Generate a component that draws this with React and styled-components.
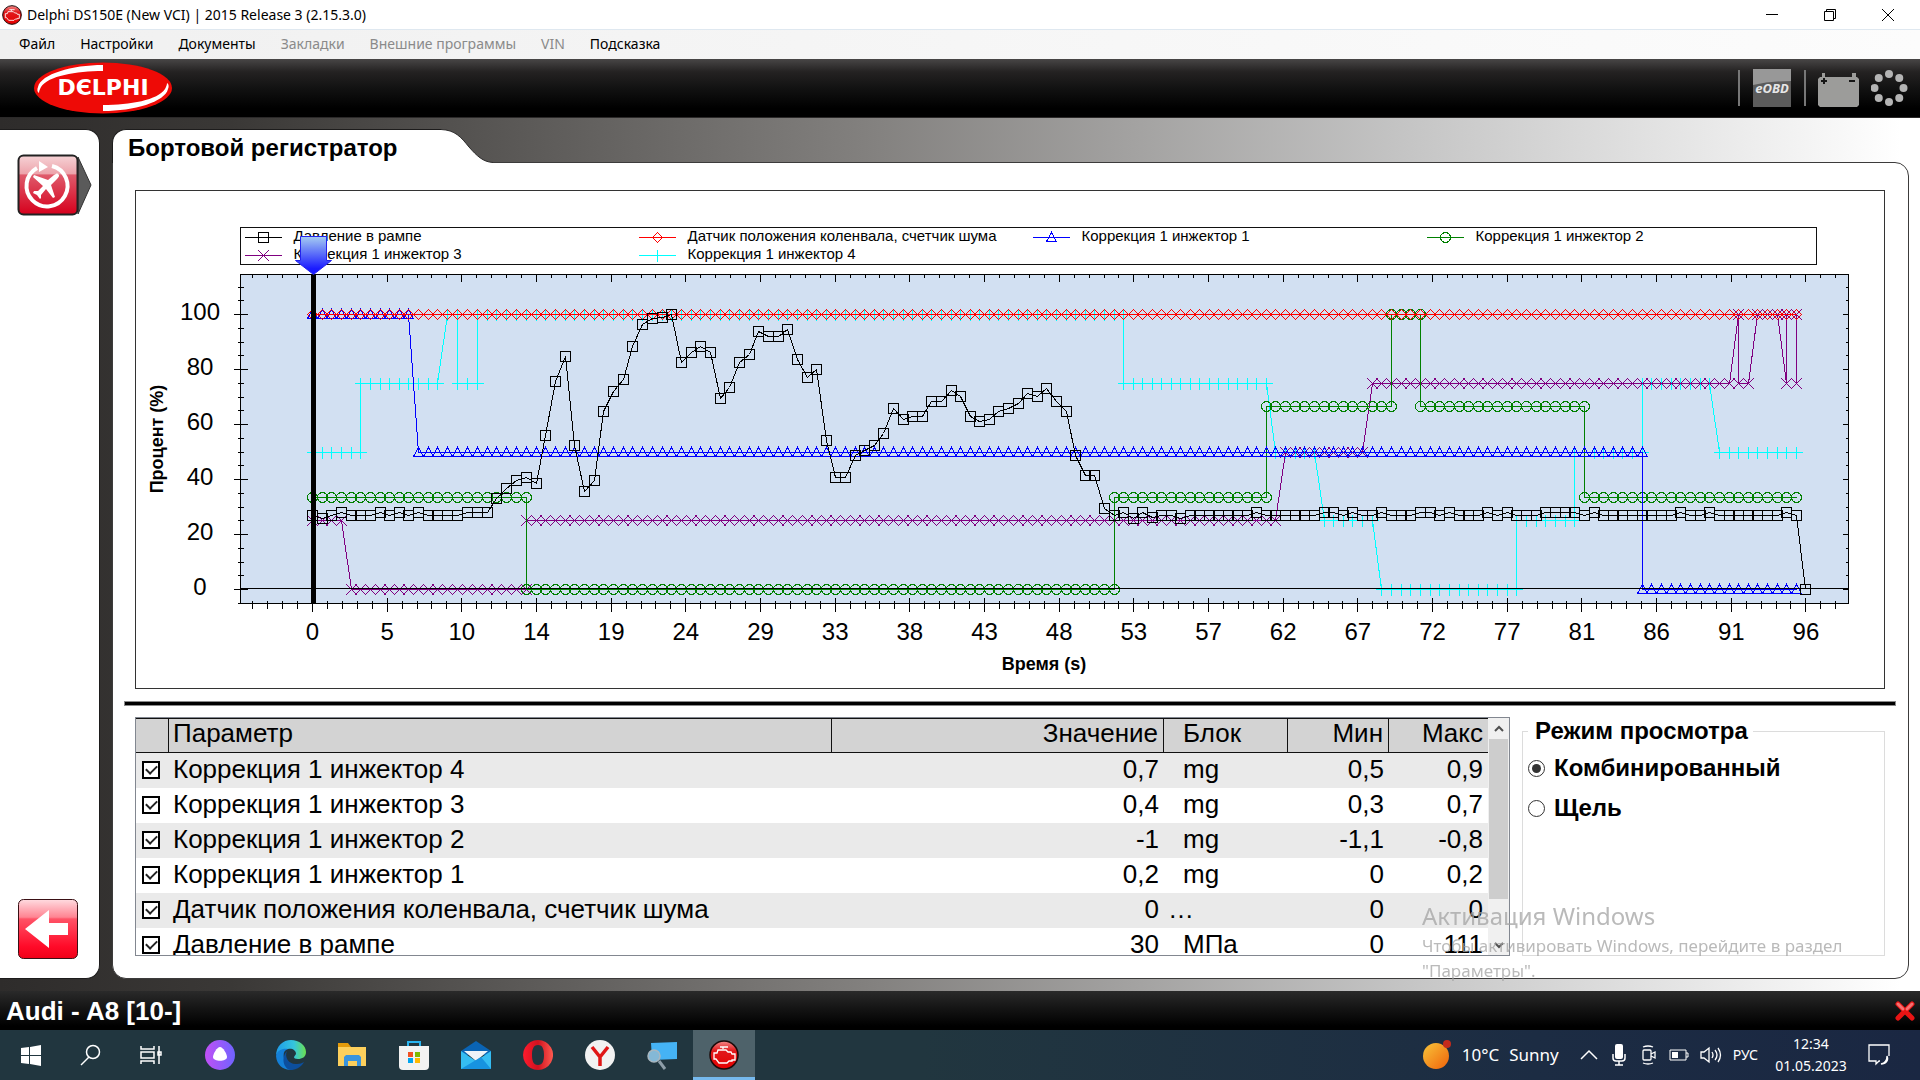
import React from 'react';
import styled, { createGlobalStyle } from 'styled-components';

const SANS = '"Liberation Sans", Arial, sans-serif';
const UI = '"Noto Sans", "Open Sans", sans-serif';

const GlobalStyle = createGlobalStyle`
  * { box-sizing: border-box; }
  body {
    margin: 0;
    background: #ffffff;
    color: #000000;
    font-family: ${SANS};
  }
  button, input { font: inherit; margin: 0; }
`;

const S = {
    Page: styled.div`
    min-height: 100vh;
    display: flex;
    flex-direction: column;
  `,
    TitleBar: styled.header`
    height: 29px;
    padding: 0 26px 0 2px;
    display: flex;
    align-items: center;
    gap: 5px;
    font-family: ${UI};
  `,
    WindowTitle: styled.h1`
    flex: 1;
    margin: 0;
    font-size: 14px;
    line-height: 20px;
    font-weight: normal;
  `,
    WindowButtons: styled.div`
    display: flex;
    gap: 46px;
  `,
    PlainButton: styled.button`
    display: flex;
    align-items: center;
    justify-content: center;
    padding: 0;
    border: 0;
    background: transparent;
    color: inherit;
  `,
    MenuBar: styled.nav`
    height: 30px;
    padding: 0 19px 2px;
    display: flex;
    align-items: center;
    gap: 25px;
    border-top: 1px solid #dfe8f0;
    background: linear-gradient(90deg, #f0f0f0, #fcfcfc);
    font-family: ${UI};
    font-size: 14px;
    line-height: 20px;
  `,
    MenuItem: styled.button`
    padding: 0;
    border: 0;
    background: transparent;
    color: #000000;
    white-space: nowrap;
    &:disabled { color: #8a8a8a; }
  `,
    Brand: styled.div`
    height: 59px;
    padding: 0 11px 0 34px;
    display: flex;
    align-items: center;
    background: linear-gradient(180deg, #484646 0%, #242222 22%, #121212 50%, #000000 85%);
    border-bottom: 1px solid #2b2929;
  `,
    BrandTools: styled.div`
    margin-left: auto;
    display: flex;
    align-items: center;
    gap: 12px;
  `,
    Separator: styled.span`
    width: 2px;
    height: 36px;
    background: #777777;
  `,
    Workspace: styled.div`
    flex: 1;
    padding: 11px 11px 12px 0;
    display: flex;
    gap: 12px;
    background: linear-gradient(90deg, #2e2c2b 0%, #3a3836 12%, #82807e 45%, #c4c4c4 73%, #ffffff 99%);
  `,
    Sidebar: styled.aside`
    width: 100px;
    padding: 24px 7px 18px 17px;
    display: flex;
    flex-direction: column;
    justify-content: space-between;
    align-items: flex-start;
    background: #ffffff;
    border: 1px solid #1d1c1c;
    border-left: 0;
    border-radius: 0 14px 14px 0;
  `,
    Main: styled.main`
    flex: 1;
    min-width: 0;
    display: flex;
    flex-direction: column;
  `,
    TabRow: styled.div`
    display: flex;
    margin-bottom: -1px;
    z-index: 1;
  `,
    Tab: styled.h2`
    width: 329px;
    height: 34px;
    margin: 0;
    padding: 4px 0 0 15px;
    background: #ffffff;
    border: 1px solid #1d1c1c;
    border-width: 1px 0 0 1px;
    border-radius: 14px 0 0 0;
    font-size: 24px;
    line-height: 28px;
    white-space: nowrap;
  `,
    Panel: styled.section`
    flex: 1;
    padding: 27px 12px 22px 11px;
    background: #ffffff;
    border: 1px solid #3c3b3b;
    border-radius: 0 14px 14px 14px;
    display: flex;
    flex-direction: column;
  `,
    ChartBox: styled.div`
    margin: 0 11px 12px;
    border: 1px solid #333333;
    svg { display: block; width: 100%; height: auto; }
  `,
    Divider: styled.div`
    height: 5px;
    background: #000000;
    border: 1px solid #8a8a8a;
  `,
    Lower: styled.div`
    flex: 1;
    margin: 11px 11px 0;
    display: flex;
    gap: 12px;
  `,
    TableFrame: styled.div`
    flex: 1;
    height: 239px;
    overflow: hidden;
    display: flex;
    border: 1px solid #828790;
  `,
    Table: styled.table`
    flex: 1;
    align-self: flex-start;
    table-layout: fixed;
    border-collapse: separate;
    border-spacing: 0;
    font-size: 26px;
    line-height: 28px;
    white-space: nowrap;
  `,
    Head: styled.th`
    width: ${props => props.$width || 'auto'};
    height: 35px;
    padding: 0 5px 5px ${props => (props.$unit ? 19 : 4)}px;
    background: #d3d3d3;
    border: 1px solid #111111;
    border-width: 1px ${props => (props.$last ? 0 : 1)}px 1px 0;
    font-weight: normal;
    text-align: ${props => props.$align || 'left'};
  `,
    Row: styled.tr`
    background: #ffffff;
    &:nth-child(odd) { background: #eaeaea; }
  `,
    Cell: styled.td`
    height: 35px;
    padding: 0 5px 3px ${props => (props.$indent || 4)}px;
    text-align: ${props => props.$align || 'left'};
  `,
    CheckCell: styled.td`
    height: 35px;
    padding: 0 0 1px 6px;
    vertical-align: middle;
  `,
    CheckBox: styled.input`
    appearance: none;
    display: grid;
    place-items: center;
    width: 18px;
    height: 18px;
    background: #ffffff;
    border: 2px solid #000000;
    &:checked::after {
      content: '';
      width: 5px;
      height: 9px;
      margin-bottom: 3px;
      border: solid #222222;
      border-width: 0 2px 2px 0;
      transform: rotate(45deg);
    }
  `,
    ScrollBar: styled.div`
    width: 21px;
    padding: 0 1px;
    display: flex;
    flex-direction: column;
    background: #f0f0f0;
  `,
    ScrollButton: styled.button`
    height: 21px;
    padding: 0;
    border: 0;
    background: transparent;
    display: flex;
    align-items: center;
    justify-content: center;
  `,
    ScrollTrack: styled.div`
    flex: 1;
    display: flex;
    flex-direction: column;
  `,
    ScrollThumb: styled.div`
    height: 82%;
    background: #cdcdcd;
  `,
    ViewMode: styled.fieldset`
    width: 363px;
    margin: 0;
    padding: 9px 5px 0;
    border: 1px solid #dcdcdc;
    font-size: 24px;
    line-height: 28px;
    font-weight: bold;
  `,
    ViewLegend: styled.legend`
    padding: 0 5px 0 7px;
  `,
    RadioLabel: styled.label`
    display: flex;
    align-items: center;
    gap: 9px;
    margin-bottom: 12px;
  `,
    Radio: styled.input`
    appearance: none;
    width: 17px;
    height: 17px;
    border: 1px solid #333333;
    border-radius: 50%;
    background: #ffffff;
    display: grid;
    place-items: center;
    &:checked::after {
      content: '';
      width: 9px;
      height: 9px;
      border-radius: 50%;
      background: #333333;
    }
  `,
    StatusBar: styled.footer`
    height: 39px;
    padding: 0 5px 0 6px;
    display: flex;
    align-items: center;
    justify-content: space-between;
    background: linear-gradient(180deg, #2a2a2a, #141414 45%, #000000 90%);
    color: #ffffff;
    font-size: 26px;
    line-height: 32px;
    font-weight: bold;
  `,
    TaskBar: styled.div`
    height: 50px;
    display: flex;
    background: linear-gradient(90deg, #21363f 0%, #21363f 48%, #1c2c43 80%, #1a2742 100%);
    color: #ffffff;
    font-family: ${UI};
  `,
    TaskButton: styled.button`
    width: ${props => props.$width || 62}px;
    padding: 3px 0 0;
    border: 0;
    border-bottom: 3px solid ${props => (props.$active ? '#76b9ed' : 'transparent')};
    background: ${props => (props.$active ? '#4e626a' : 'transparent')};
    display: flex;
    align-items: center;
    justify-content: center;
  `,
    Tray: styled.div`
    margin-left: auto;
    padding-right: 30px;
    display: flex;
    align-items: center;
    gap: 11px;
  `,
    Weather: styled.button`
    display: flex;
    align-items: center;
    gap: 10px;
    padding: 0;
    border: 0;
    background: transparent;
    color: inherit;
    font-size: 17px;
    line-height: 24px;
    margin-right: 10px;
  `,
    Lang: styled.span`
    font-size: 14px;
    line-height: 22px;
  `,
    Clock: styled.time`
    width: 84px;
    margin: 0 4px 0 0;
    font-size: 14px;
    line-height: 22px;
    text-align: center;
  `,
    // system notice floating over every window
    Watermark: styled.div`
    position: fixed;
    right: 60px;
    bottom: 97px;
    width: 438px;
    color: #a3a3a3;
    opacity: 0.75;
    font-family: ${UI};
    font-size: 17px;
    line-height: 25px;
    pointer-events: none;
  `,
    WatermarkTitle: styled.div`
    font-size: 24px;
    line-height: 34px;
  `,
};

/* ---------- chart ---------- */

const PLOT = { left: 104.5, right: 1712.5, top: 83.5, bottom: 412.5 };
const AXIS_X = 176.5;
const AXIS_STEP = 74.67;
const ZERO_Y = 398;
const PX_PER_PERCENT = 2.75;

const TIME_LABELS = [0, 5, 10, 14, 19, 24, 29, 33, 38, 43, 48, 53, 57, 62, 67, 72, 77, 81, 86, 91, 96];

// sample number -> offset from the start, the polling rate is not quite even
const CLOCK = [[0, 0], [14, 135], [22, 214], [50, 485], [82, 792], [101, 973], [154, 1484], [155, 1493]];

const sampleX = i => {
    const k = Math.max(1, CLOCK.findIndex(c => c[0] >= i));
    const [i0, x0] = CLOCK[k - 1];
    const [i1, x1] = CLOCK[k];
    return AXIS_X + Math.round(x0 + ((i - i0) / (i1 - i0)) * (x1 - x0));
};
const valueY = v => Math.round(ZERO_Y - v * PX_PER_PERCENT) + 0.5;

// [from, to, value] runs to a flat list of samples
const runs = list => list.flatMap(([from, to, v]) =>
    Array.from({ length: to - from + 1 }, (_, n) => [from + n, v]));

const PRESSURE = [
    27, 26, 27, 28, 27, 27, 27, 28, 27, 28, 27, 28, 27, 27, 27, 27, 28, 28, 28, 33,
    36.8, 39.6, 40.6, 38.5, 56, 75.5, 84.6, 52.3, 35.8, 39.5, 64.8, 72, 76.4, 88.3, 96.5, 98.4, 99, 100, 82.7, 86.3,
    88.4, 86.3, 69.3, 73.6, 82.7, 85.6, 93.7, 92, 92, 94.6, 83.8, 77.2, 80.1, 54.3, 40.6, 40.6, 48.6, 50.5, 52.3, 56.8,
    65.8, 62, 63, 63, 68.5, 68.5, 72.3, 70.2, 63, 61.1, 62, 64.8, 65.7, 67.6, 71.3, 70.3, 73.1, 68.5, 64.8, 48.6,
    41.4, 41.4, 29.6, 26.8, 28, 26, 28, 26.2, 27, 27, 26, 27, 27, 27, 27, 27, 27, 27, 28, 27,
    27, 27, 27, 27, 27, 28, 28, 27, 28, 27, 27, 28, 27, 27, 27, 28, 28, 27, 28, 27,
    27, 27, 28, 27, 28, 27, 27, 27, 28, 28, 28, 28, 27, 28, 27, 27, 27, 27, 27, 27,
    27, 27, 28, 27, 27, 28, 27, 27, 27, 27, 27, 27, 27, 28, 27, 0,
];

const MARKS = {
    square: 'm-5,-5h10v10h-10z',
    diamond: 'm0,-5l5,5l-5,5l-5,-5z',
    triangle: 'm0,-5l5,9h-10z',
    circle: 'm-5,0a5,5 0 1,0 10,0a5,5 0 1,0 -10,0',
    cross: 'm-5.5,-5.5l11,11m0,-11l-11,11',
    plus: 'm-6,0h12m-6,-6v12',
};

const SERIES = [
    {
        name: 'Давление в рампе', color: '#000000', mark: 'square',
        data: PRESSURE.map((v, i) => [i, v]),
    },
    {
        name: 'Датчик положения коленвала, счетчик шума', color: '#ff0000', mark: 'diamond',
        data: runs([[0, 154, 100]]),
    },
    {
        name: 'Коррекция 1 инжектор 1', color: '#0000ff', mark: 'triangle',
        data: runs([[0, 10, 100], [11, 138, 50], [138, 154, 0]]),
    },
    {
        name: 'Коррекция 1 инжектор 2', color: '#008000', mark: 'circle',
        data: runs([[0, 22, 33.3], [22, 83, 0], [83, 99, 33.3], [99, 112, 66.7], [112, 115, 100], [115, 132, 66.7], [132, 154, 33.3]]),
    },
    {
        name: 'Коррекция 1 инжектор 3', color: '#800080', mark: 'cross',
        data: runs([[0, 3, 25], [4, 22, 0], [22, 100, 25], [101, 109, 50], [110, 147, 75], [148, 148, 100], [148, 149, 75],
            [150, 152, 100], [153, 153, 75], [153, 154, 100], [154, 154, 75]]),
    },
    {
        name: 'Коррекция 1 инжектор 4', color: '#00ffff', mark: 'plus',
        data: runs([[0, 5, 50], [5, 13, 75], [14, 15, 100], [15, 17, 75], [17, 84, 100], [84, 99, 75], [100, 104, 50],
            [105, 110, 25], [111, 125, 0], [125, 131, 25], [131, 138, 50], [138, 145, 75], [146, 154, 50]]),
    },
];

const range = (from, to) => Array.from({ length: to - from + 1 }, (_, n) => from + n);

const ticks = () => {
    let d = '';
    range(-4, 102).forEach(n => {
        const x = Math.round(AXIS_X + (n * AXIS_STEP) / 5 - 0.5) + 0.5;
        const major = n % 5 === 0;
        const len = major ? 7 : 4;
        d += `M${x},${PLOT.top}v${major ? 7 : 3}M${x},${PLOT.bottom - len + 1}v${len * 2}`;
    });
    range(-1, 22).forEach(n => {
        const y = valueY(n * 5);
        const major = n % 4 === 0;
        const len = major ? 7 : 3;
        d += `M${PLOT.left - len},${y}h${len * 2}M${PLOT.right},${y}h${major ? -6 : -3}`;
    });
    return d;
};

const Curve = ({ series }) => (
    <g stroke={series.color} fill="none">
        <path d={'M' + series.data.map(([i, v]) => `${sampleX(i)},${valueY(v)}`).join('L')}/>
        <path d={series.data.map(([i, v]) => `M${sampleX(i)},${valueY(v)}${MARKS[series.mark]}`).join('')}/>
    </g>
);

const LegendEntry = ({ series, index }) => {
    const x = 108.5 + (index % 4) * 394;
    const y = index < 4 ? 46.5 : 64.5;
    return (
        <g>
            <path d={`M${x},${y}h37M${x + 19},${y}${MARKS[series.mark]}`} stroke={series.color} fill="none"
                  shapeRendering="crispEdges"/>
            <text x={x + 49} y={y + 3} fontSize="15">{series.name}</text>
        </g>
    );
};

const Chart = () => (
    <svg viewBox="0 0 1748 497" fontFamily={SANS} role="img" aria-label="Бортовой регистратор">
        <defs>
            <linearGradient id="cursor" x1="0" y1="0" x2="0" y2="1">
                <stop offset="0" stopColor="#a6cdf2"/>
                <stop offset="0.85" stopColor="#1a1aff"/>
            </linearGradient>
        </defs>
        <rect x={PLOT.left} y={PLOT.top} width={PLOT.right - PLOT.left} height={PLOT.bottom - PLOT.top}
              fill="#d2e0f2" stroke="#000000" shapeRendering="crispEdges"/>
        <g shapeRendering="crispEdges">
            <path d={ticks()} stroke="#000000"/>
            {[...SERIES].reverse().map(s => <Curve key={s.name} series={s}/>)}
            <path d={`M${PLOT.left},${ZERO_Y - 0.5}H${PLOT.right}`} stroke="#000000"/>
        </g>
        <rect x="104.5" y="36.5" width="1576" height="37" fill="#ffffff" stroke="#111111" shapeRendering="crispEdges"/>
        {SERIES.map((s, n) => <LegendEntry key={s.name} series={s} index={n}/>)}
        <rect x="175" y="83" width="5" height="330" fill="#000000"/>
        <path d="M164.500,45.500h26v24h5l-18,14l-18,-14h5z" fill="url(#cursor)" stroke="#2222ee"/>
        {[0, 20, 40, 60, 80, 100].map(v => (
            <text key={v} x="64" y={valueY(v) + 5} fontSize="24" textAnchor="middle">{v}</text>
        ))}
        {TIME_LABELS.map((t, n) => (
            <text key={t} x={AXIS_X + n * AXIS_STEP} y="449" fontSize="24" textAnchor="middle">{t}</text>
        ))}
        <text x="908" y="479" fontSize="18" fontWeight="bold" textAnchor="middle">Время (s)</text>
        <text transform="translate(27 248) rotate(-90)" fontSize="18" fontWeight="bold" textAnchor="middle">
            Процент (%)
        </text>
    </svg>
);

/* ---------- icons ---------- */

const EngineBadge = ({ size }) => (
    <svg width={size} height={size} viewBox="0 0 30 30">
        <defs>
            <linearGradient id="badge" x1="0" y1="0" x2="0" y2="1">
                <stop offset="0" stopColor="#f58a8a"/>
                <stop offset="0.35" stopColor="#e0191c"/>
                <stop offset="1" stopColor="#e60000"/>
            </linearGradient>
        </defs>
        <circle cx="15" cy="15" r="14" fill="url(#badge)" stroke="#1b0a0a" strokeWidth="1.500"/>
        <path d="M11 7h8M14 7v2M9 10h8l2 2h3l1 2h3v6h-3v1h-3l-2 2h-8l-3-4H5v-6h3z" fill="none"
              stroke="#ffffff" strokeWidth="1.300"/>
    </svg>
);

const DelphiLogo = () => (
    <svg width="138" height="52" viewBox="0 0 138 52">
        <ellipse cx="69" cy="26" rx="69" ry="25.500" fill="#ee0a06"/>
        <path d="M69 3v6C42 9 14 14 7 25c-1 2-2 4-2 6-2-1-2-4-1-6C7 12 38 3 69 3zM69 49v-6c27 0 55-5 62-16 1-2 2-4 2-6 2 1 2 4 1 6-3 13-34 22-65 22z"
              fill="#ffffff"/>
        <text x="69" y="33" fontFamily={'"DejaVu Sans", sans-serif'} fontSize="22" fontWeight="bold" fill="#ffffff"
              textAnchor="middle">DЄLPHI</text>
    </svg>
);

const EobdIcon = () => (
    <svg width="40" height="40" viewBox="0 0 40 40">
        <rect x="1" y="1" width="38" height="38" fill="#5c5c5c"/>
        <path d="M1 1h38v12Q18 13 1 17z" fill="#989898"/>
        <text x="20" y="25" fontFamily={UI} fontSize="13" fontWeight="bold" fontStyle="italic" fill="#e6e6e6"
              textAnchor="middle">eOBD</text>
    </svg>
);

const BatteryIcon = () => (
    <svg width="41" height="38" viewBox="0 -4 41 38">
        <path d="M4 0h3v4h27V0h4v4h1l2 2v26l-2 2H2l-2-2V6l2-2h2z" fill="#9c9c9a"/>
        <path d="M3 8h6M6 5v6M31 8h6" stroke="#161616" strokeWidth="2"/>
    </svg>
);

const DotsIcon = () => (
    <svg width="38" height="38" viewBox="0 0 38 38" fill="#b4b4b4">
        {range(0, 7).map(n => (
            <circle key={n} cx={18 + 14.5 * Math.cos((n * Math.PI) / 4)} cy={19 + 14 * Math.sin((n * Math.PI) / 4)} r="4"/>
        ))}
    </svg>
);

const PlaneIcon = () => (
    <svg width="75" height="62" viewBox="0 0 75 62">
        <defs>
            <linearGradient id="plane" x1="0" y1="0" x2="0" y2="1">
                <stop offset="0" stopColor="#f6d3d6"/>
                <stop offset="0.310" stopColor="#eda3ab"/>
                <stop offset="0.330" stopColor="#df5a6b"/>
                <stop offset="1" stopColor="#d6001c"/>
            </linearGradient>
        </defs>
        <path d="M61 3l13 28-13 29z" fill="#5a5a5a" stroke="#333333"/>
        <rect x="1.500" y="1.500" width="59" height="59" rx="5" fill="url(#plane)" stroke="#222222" strokeWidth="2"/>
        <path d="M35 12a20.500 20.500 0 1 1-15 2" fill="none" stroke="#ffffff" strokeWidth="4"/>
        <path d="M22 7l9 6-9 5z" fill="#ffffff"/>
        <path d="M41 20c2 1 1 3-1 5l-6 6 4 12-2 1-7-9-5 6v3l-1 1-3-4-4-2 1-2h4l5-5-10-9 1-2 14 5 6-5c2-1 3-2 4-1z" fill="#ffffff"/>
    </svg>
);

const BackIcon = () => (
    <svg width="62" height="62" viewBox="0 0 62 62">
        <defs>
            <linearGradient id="back" x1="0" y1="0" x2="0" y2="1">
                <stop offset="0" stopColor="#ffdbe0"/>
                <stop offset="0.300" stopColor="#ff8492"/>
                <stop offset="0.330" stopColor="#ff5266"/>
                <stop offset="0.800" stopColor="#ff0a28"/>
                <stop offset="1" stopColor="#f00018"/>
            </linearGradient>
        </defs>
        <rect x="1.500" y="1.500" width="59" height="59" rx="5" fill="url(#back)" stroke="#3a1015"/>
        <path d="M8 31l24-19v13h19v12H32v13z" fill="#ffffff"/>
    </svg>
);

const TASKS = [
    {
        title: 'Пуск', width: 61,
        icon: <path d="M5 8l8-1v8H5zM14 7l11-2v10H14zM5 16h8v8l-8-1zM14 16h11v10l-11-2z" fill="#ffffff"/>,
    },
    {
        title: 'Поиск', width: 61,
        icon: <g fill="none" stroke="#ffffff" strokeWidth="1.500"><circle cx="16" cy="12" r="6.500"/><path d="M12 17l-8 8"/></g>,
    },
    {
        title: 'Представление задач', width: 57,
        icon: <path d="M5 6v3h13V6M5 24v-3h13v3M5 12h13v6H5zM23 6v18M22 12h3v3h-3z" fill="none" stroke="#ffffff" strokeWidth="1.500"/>,
    },
    {
        title: 'Алиса', width: 81,
        icon: <g><circle cx="15" cy="15" r="15" fill="url(#alice)"/><path d="M15 7c3 0 7 7 7 10 0 5-14 5-14 0 0-3 4-10 7-10z" fill="#ffffff"/></g>,
    },
    {
        title: 'Edge', width: 61,
        icon: (
            <g>
                <path d="M0 16C0 6 7 0 15 0s15 5 15 12c0 5-4 7-8 7-3 0-4-1-4-2l2-3c0-4-4-6-8-5C6 9 1 12 0 16z" fill="url(#edge)"/>
                <path d="M0 16C1 10 7 8 12 9c-4 1-5 5-4 9 1 7 7 10 13 9-7 6-20 2-21-11z" fill="#1480d8"/>
                <path d="M11 11c-3 6 2 14 10 13 3 0 5-1 7-2-2 4-7 8-13 8C7 29 5 17 11 11z" fill="#0c4f9e"/>
            </g>
        ),
    },
    {
        title: 'Проводник',
        icon: (
            <g>
                <path d="M1 3h10l3 4h-13z" fill="#e39b0b"/>
                <path d="M1 7h28v19H1z" fill="#fdd05c"/>
                <path d="M7 26V17l2-2h13l2 2v9h-4v-5h-9v5z" fill="#3a94dd"/>
            </g>
        ),
    },
    {
        title: 'Store',
        icon: (
            <g>
                <path d="M9 7V2h12v5" fill="none" stroke="#28b4f0" strokeWidth="2"/>
                <path d="M0 6h30v20q0 4-4 4H4q-4 0-4-4z" fill="#f2f2f2"/>
                <path d="M9 12h5v5H9z" fill="#f25022"/><path d="M16 12h5v5h-5z" fill="#7fba00"/>
                <path d="M9 18h5v5H9z" fill="#00a4ef"/><path d="M16 18h5v5h-5z" fill="#ffb900"/>
            </g>
        ),
    },
    {
        title: 'Почта',
        icon: (
            <g>
                <path d="M0 11L15 1l15 10v4H0z" fill="#0a64b4"/>
                <path d="M3 11h24L15 21z" fill="#eef3f8"/>
                <path d="M0 11l15 10 15-10v18H0z" fill="#35bdf2"/>
                <path d="M0 29L20 17l10 12z" fill="#1793e0"/>
            </g>
        ),
    },
    {
        title: 'Opera',
        icon: (
            <path fillRule="evenodd" fill="url(#opera)"
                  d="M15 0a15 15 0 1 0 .1 0zM15 5c5 0 6 5 6 10s-1 10-6 10-6-5-6-10 1-10 6-10z"/>
        ),
    },
    {
        title: 'Яндекс Браузер',
        icon: <g><circle cx="15" cy="15" r="15" fill="#f2f2f2"/><path d="M7 7l8 10 8-10M15 16v10" fill="none" stroke="#e01616" strokeWidth="3.500"/></g>,
    },
    {
        title: 'Удаленный стол',
        icon: (
            <g>
                <path d="M4 3l26-1v17l-25 1z" fill="#45b3f5"/>
                <path d="M12 21l6 8" stroke="#8d9da8" strokeWidth="3"/>
                <circle cx="7" cy="16" r="6" fill="#84b8d6" stroke="#a9b7bf" strokeWidth="1.500"/>
            </g>
        ),
    },
];

const PARAMETERS = [
    { name: 'Коррекция 1 инжектор 4', value: '0,7', unit: 'mg', min: '0,5', max: '0,9' },
    { name: 'Коррекция 1 инжектор 3', value: '0,4', unit: 'mg', min: '0,3', max: '0,7' },
    { name: 'Коррекция 1 инжектор 2', value: '-1', unit: 'mg', min: '-1,1', max: '-0,8' },
    { name: 'Коррекция 1 инжектор 1', value: '0,2', unit: 'mg', min: '0', max: '0,2' },
    { name: 'Датчик положения коленвала, счетчик шума', value: '0', unit: '…', min: '0', max: '0' },
    { name: 'Давление в рампе', value: '30', unit: 'МПа', min: '0', max: '111' },
];

const MENU = [
    { label: 'Файл' },
    { label: 'Настройки' },
    { label: 'Документы' },
    { label: 'Закладки', disabled: true },
    { label: 'Внешние программы', disabled: true },
    { label: 'VIN', disabled: true },
    { label: 'Подсказка' },
];

const ParameterTable = () => (
    <S.TableFrame>
        <S.Table>
            <thead>
                <tr>
                    <S.Head $width="33px" aria-label="Показать"/>
                    <S.Head>Параметр</S.Head>
                    <S.Head $width="332px" $align="right">Значение</S.Head>
                    <S.Head $width="124px" $unit>Блок</S.Head>
                    <S.Head $width="101px" $align="right">Мин</S.Head>
                    <S.Head $width="99px" $align="right" $last>Макс</S.Head>
                </tr>
            </thead>
            <tbody>
                {PARAMETERS.map(p => (
                    <S.Row key={p.name}>
                        <S.CheckCell><S.CheckBox type="checkbox" defaultChecked aria-label={p.name}/></S.CheckCell>
                        <S.Cell>{p.name}</S.Cell>
                        <S.Cell $align="right">{p.value}</S.Cell>
                        <S.Cell $indent={p.unit === '…' ? 4 : 19}>{p.unit}</S.Cell>
                        <S.Cell $align="right">{p.min}</S.Cell>
                        <S.Cell $align="right">{p.max}</S.Cell>
                    </S.Row>
                ))}
            </tbody>
        </S.Table>
        <S.ScrollBar>
            <S.ScrollButton aria-label="Вверх">
                <svg width="12" height="8" viewBox="0 0 12 8"><path d="M2 6l4-4 4 4" fill="none" stroke="#505050" strokeWidth="2"/></svg>
            </S.ScrollButton>
            <S.ScrollTrack><S.ScrollThumb/></S.ScrollTrack>
            <S.ScrollButton aria-label="Вниз">
                <svg width="12" height="8" viewBox="0 0 12 8"><path d="M2 2l4 4 4-4" fill="none" stroke="#505050" strokeWidth="2"/></svg>
            </S.ScrollButton>
        </S.ScrollBar>
    </S.TableFrame>
);

const TaskBar = () => (
    <S.TaskBar>
        <svg width="0" height="0" aria-hidden="true">
            <defs>
                <linearGradient id="alice"><stop offset="0" stopColor="#c050f5"/><stop offset="1" stopColor="#6f63ff"/></linearGradient>
                <linearGradient id="edge"><stop offset="0" stopColor="#1e9be8"/><stop offset="0.600" stopColor="#35c5dd"/><stop offset="1" stopColor="#6be04f"/></linearGradient>
                <linearGradient id="opera"><stop offset="0" stopColor="#ff1b2d"/><stop offset="0.500" stopColor="#d0121f"/><stop offset="1" stopColor="#ff5a50"/></linearGradient>
                <linearGradient id="sun" x1="0" y1="0" x2="1" y2="1"><stop offset="0" stopColor="#f8c53a"/><stop offset="1" stopColor="#f0620a"/></linearGradient>
            </defs>
        </svg>
        {TASKS.map(t => (
            <S.TaskButton key={t.title} $width={t.width} aria-label={t.title}>
                <svg width="30" height="30" viewBox="0 0 30 30">{t.icon}</svg>
            </S.TaskButton>
        ))}
        <S.TaskButton $active aria-label="Delphi"><EngineBadge size={30}/></S.TaskButton>
        <S.Tray>
            <S.Weather>
                <svg width="30" height="32" viewBox="0 0 30 32">
                    <circle cx="14" cy="17" r="13" fill="url(#sun)"/><circle cx="25" cy="5" r="4" fill="#c42b1c"/>
                </svg>
                <span>10°C</span>
                <span>Sunny</span>
            </S.Weather>
            <svg width="18" height="12" viewBox="0 0 18 12" fill="none" stroke="#ffffff" strokeWidth="1.500"><path d="M1 10l8-8 8 8"/></svg>
            <svg width="20" height="22" viewBox="-2 0 20 22">
                <rect x="4" y="0" width="8" height="15" rx="2" fill="#ffffff"/>
                <path d="M2 10v4q0 3 3 3h6q3 0 3-3v-4M8 17v4M4 21h8" fill="none" stroke="#ffffff" strokeWidth="1.500"/>
            </svg>
            <svg width="18" height="20" viewBox="0 0 18 20" fill="none" stroke="#ffffff" strokeWidth="1.300">
                <rect x="3" y="5" width="8" height="10" rx="1"/><path d="M11 9l4-2v6l-4-2M3 2q5-2 10 0M3 18q5 2 10 0"/>
            </svg>
            <svg width="20" height="12" viewBox="0 0 20 12">
                <path d="M1 1h16v10H1zM17 4h2v4h-2" fill="none" stroke="#ffffff"/><path d="M3 3h6v6H3z" fill="#ffffff"/>
            </svg>
            <svg width="22" height="18" viewBox="0 0 22 18" fill="none" stroke="#ffffff" strokeWidth="1.300">
                <path d="M1 6h3l5-4v14l-5-4H1zM12 6q2 3 0 6M15 4q4 5 0 10M18 2q5 7 0 14"/>
            </svg>
            <S.Lang>РУС</S.Lang>
            <S.Clock dateTime="2023-05-01T12:34">12:34<br/>01.05.2023</S.Clock>
            <svg width="22" height="22" viewBox="0 0 22 22" fill="none" stroke="#ffffff" strokeWidth="1.300">
                <path d="M12 17h-1l-3 3v-3H1V1h20v11"/><path d="M19 12c2 4-1 8-6 8 4-1 6-4 6-8z" fill="#ffffff"/>
            </svg>
        </S.Tray>
    </S.TaskBar>
);

const App = () => {
    return (
        <S.Page>
            <GlobalStyle/>
            <S.TitleBar>
                <EngineBadge size={20}/>
                <S.WindowTitle>Delphi DS150E (New VCI) | 2015 Release 3 (2.15.3.0)</S.WindowTitle>
                <S.WindowButtons>
                    <S.PlainButton aria-label="Свернуть">
                        <svg width="12" height="12" viewBox="0 0 12 12"><path d="M0 5.500h12" stroke="#000000"/></svg>
                    </S.PlainButton>
                    <S.PlainButton aria-label="Развернуть">
                        <svg width="12" height="12" viewBox="0 0 12 12" fill="none" stroke="#000000">
                            <path d="M.500 2.500h9v9h-9zM2.500 2.500v-2h9v9h-2"/>
                        </svg>
                    </S.PlainButton>
                    <S.PlainButton aria-label="Закрыть">
                        <svg width="12" height="12" viewBox="0 0 12 12" stroke="#000000"><path d="M0 0l12 12M12 0L0 12"/></svg>
                    </S.PlainButton>
                </S.WindowButtons>
            </S.TitleBar>
            <S.MenuBar>
                {MENU.map(m => <S.MenuItem key={m.label} disabled={m.disabled}>{m.label}</S.MenuItem>)}
            </S.MenuBar>
            <S.Brand>
                <DelphiLogo/>
                <S.BrandTools>
                    <S.Separator/>
                    <EobdIcon/>
                    <S.Separator/>
                    <BatteryIcon/>
                    <DotsIcon/>
                </S.BrandTools>
            </S.Brand>
            <S.Workspace>
                <S.Sidebar>
                    <S.PlainButton aria-label="Бортовой регистратор"><PlaneIcon/></S.PlainButton>
                    <S.PlainButton aria-label="Назад"><BackIcon/></S.PlainButton>
                </S.Sidebar>
                <S.Main>
                    <S.TabRow>
                        <S.Tab>Бортовой регистратор</S.Tab>
                        <svg width="52" height="34" viewBox="0 0 52 34">
                            <path d="M0 .500C14 1 20 8 28 18 36 27 42 33 52 33.500V34H0z" fill="#ffffff"/>
                            <path d="M0 .500C14 1 20 8 28 18 36 27 42 33 52 33.500" fill="none" stroke="#2b2a2a"/>
                        </svg>
                    </S.TabRow>
                    <S.Panel>
                        <S.ChartBox><Chart/></S.ChartBox>
                        <S.Divider/>
                        <S.Lower>
                            <ParameterTable/>
                            <S.ViewMode>
                                <S.ViewLegend>Режим просмотра</S.ViewLegend>
                                <S.RadioLabel><S.Radio type="radio" name="view" defaultChecked/>Комбинированный</S.RadioLabel>
                                <S.RadioLabel><S.Radio type="radio" name="view"/>Щель</S.RadioLabel>
                            </S.ViewMode>
                        </S.Lower>
                    </S.Panel>
                </S.Main>
            </S.Workspace>
            <S.StatusBar>
                <span>Audi - A8 [10-]</span>
                <S.PlainButton aria-label="Отключить">
                    <svg width="20" height="20" viewBox="0 0 20 20">
                        <path d="M3 3l14 14M17 3L3 17" stroke="#e81414" strokeWidth="5" strokeLinecap="round"/>
                        <path d="M3 3l5 5M17 3l-5 5" stroke="#f77070" strokeWidth="3" strokeLinecap="round"/>
                    </svg>
                </S.PlainButton>
            </S.StatusBar>
            <TaskBar/>
            <S.Watermark>
                <S.WatermarkTitle>Активация Windows</S.WatermarkTitle>
                Чтобы активировать Windows, перейдите в раздел "Параметры".
            </S.Watermark>
        </S.Page>
    );
};


export default App;
